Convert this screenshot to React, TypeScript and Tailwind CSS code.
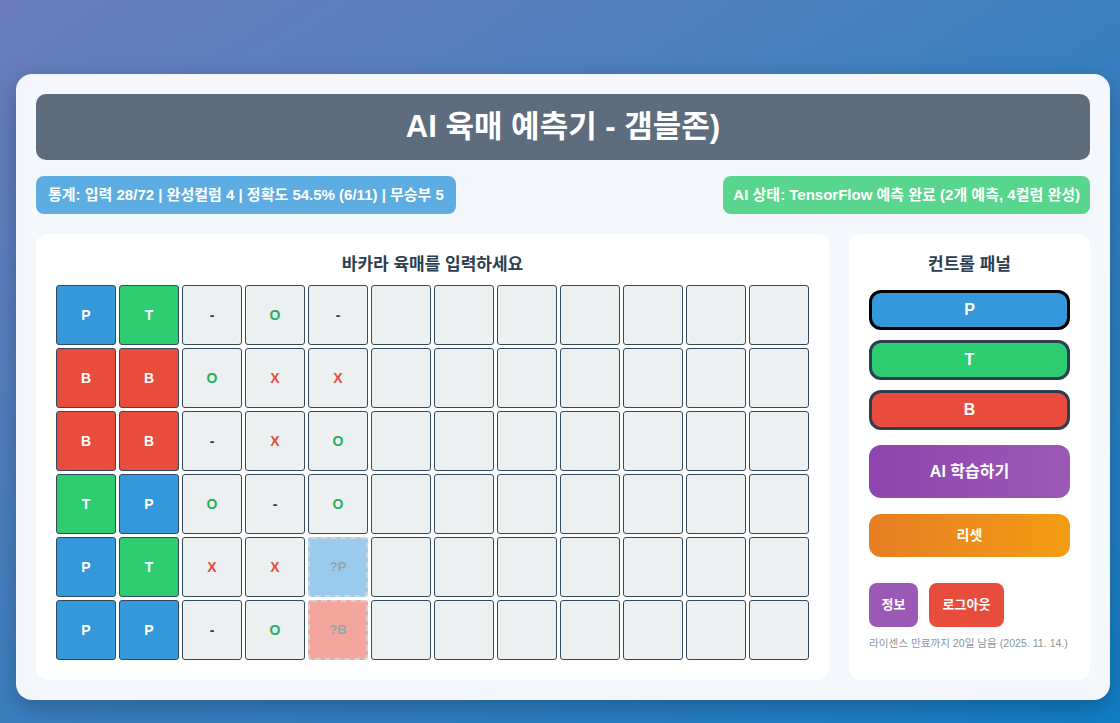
import React from 'react';

const font = { fontFamily: '"Liberation Sans", "Noto Sans CJK KR", sans-serif' };

const rows: string[][] = [
  ['P', 'T', '-', 'O', '-'],
  ['B', 'B', 'O', 'X', 'X'],
  ['B', 'B', '-', 'X', 'O'],
  ['T', 'P', 'O', '-', 'O'],
  ['P', 'T', 'X', 'X', '?P'],
  ['P', 'P', '-', 'O', '?B'],
];

const Cell = ({ v }: { v?: string }) => {
  if (v === '?P' || v === '?B') {
    return (
      <div
        className={`w-[60px] h-[60px] rounded-[3px] border-2 border-dashed border-[#cfd4d8] flex items-center justify-center text-[13px] font-bold text-[#95a5a6] ${
          v === '?P' ? 'bg-[#9acbed]' : 'bg-[#f4a69e]'
        }`}
      >
        {v}
      </div>
    );
  }
  let cls = 'bg-[#ecf0f1] text-[#2c3e50]';
  if (v === 'P') cls = 'bg-[#3498db] text-white';
  if (v === 'T') cls = 'bg-[#2ecc71] text-white';
  if (v === 'B') cls = 'bg-[#e74c3c] text-white';
  if (v === 'O') cls = 'bg-[#ecf0f1] text-[#27ae60]';
  if (v === 'X') cls = 'bg-[#ecf0f1] text-[#e74c3c]';
  return (
    <div
      className={`w-[60px] h-[60px] rounded-[3px] border border-[#34495e] flex items-center justify-center text-[14px] font-bold ${cls}`}
    >
      {v}
    </div>
  );
};

const App = () => {
  return (
    <div
      className="w-[1120px] h-[723px] overflow-hidden bg-gradient-to-br from-[#6a7cbc] via-[#3a80c0] to-[#0f7ec6] pt-[74px] pl-4 pr-[10px]"
      style={font}
    >
      <div className="w-[1094px] h-[626px] rounded-2xl bg-[#f4f7fb] p-5 shadow-[0_8px_24px_rgba(0,0,0,0.25)]">
        <div className="h-[66px] rounded-[10px] bg-[#5d6d7e] flex items-center justify-center">
          <h1 className="text-[31px] font-bold text-white">AI 육매 예측기 - 갬블존)</h1>
        </div>

        <div className="mt-4 flex justify-between">
          <div className="h-[38px] px-3 rounded-lg bg-[#5dade2] flex items-center text-[15px] font-bold text-white">
            통계: 입력 28/72 | 완성컬럼 4 | 정확도 54.5% (6/11) | 무승부 5
          </div>
          <div className="h-[38px] px-[10px] rounded-lg bg-[#58d68d] flex items-center text-[15px] font-bold text-white">
            AI 상태: TensorFlow 예측 완료 (2개 예측, 4컬럼 완성)
          </div>
        </div>

        <div className="mt-5 flex gap-5 h-[446px]">
          <div className="w-[793px] rounded-xl bg-white px-5 pt-5">
            <h2 className="text-center text-[17px] font-semibold leading-[22px] text-[#2c3e50] mb-[9px]">
              바카라 육매를 입력하세요
            </h2>
            <div className="grid grid-cols-[repeat(12,60px)] gap-[3px]">
              {rows.map((r, i) =>
                Array.from({ length: 12 }).map((_, j) => <Cell key={`${i}-${j}`} v={r[j]} />)
              )}
            </div>
          </div>

          <div className="w-[241px] rounded-xl bg-white px-5 pt-5 flex flex-col">
            <h2 className="text-center text-[17px] font-semibold leading-[22px] text-[#2c3e50] mb-[14px]">
              컨트롤 패널
            </h2>
            <div className="flex flex-col gap-[10px]">
              <button className="h-[40px] rounded-xl border-[3px] border-black bg-[#3498db] text-white text-[16px] font-bold">
                P
              </button>
              <button className="h-[40px] rounded-xl border-[3px] border-[#2c3e50] bg-[#2ecc71] text-white text-[16px] font-bold">
                T
              </button>
              <button className="h-[40px] rounded-xl border-[3px] border-[#2c3e50] bg-[#e74c3c] text-white text-[16px] font-bold">
                B
              </button>
            </div>
            <button className="mt-[15px] h-[53px] rounded-xl bg-gradient-to-r from-[#8e44ad] to-[#9b59b6] text-white text-[16px] font-bold">
              AI 학습하기
            </button>
            <button className="mt-4 h-[43px] rounded-xl bg-gradient-to-r from-[#e67e22] to-[#f39c12] text-white text-[14px] font-bold">
              리셋
            </button>
            <div className="mt-[26px] flex gap-[11px]">
              <button className="w-[49px] h-[44px] rounded-lg bg-[#9b59b6] text-white text-[13px] font-bold">
                정보
              </button>
              <button className="w-[75px] h-[44px] rounded-lg bg-[#e74c3c] text-white text-[13px] font-bold">
                로그아웃
              </button>
            </div>
            <p className="mt-[9px] text-[10.6px] text-[#8a969c] whitespace-nowrap">라이센스 만료까지 20일 남음 (2025. 11. 14.)</p>
          </div>
        </div>
      </div>
    </div>
  );
};

export default App;
